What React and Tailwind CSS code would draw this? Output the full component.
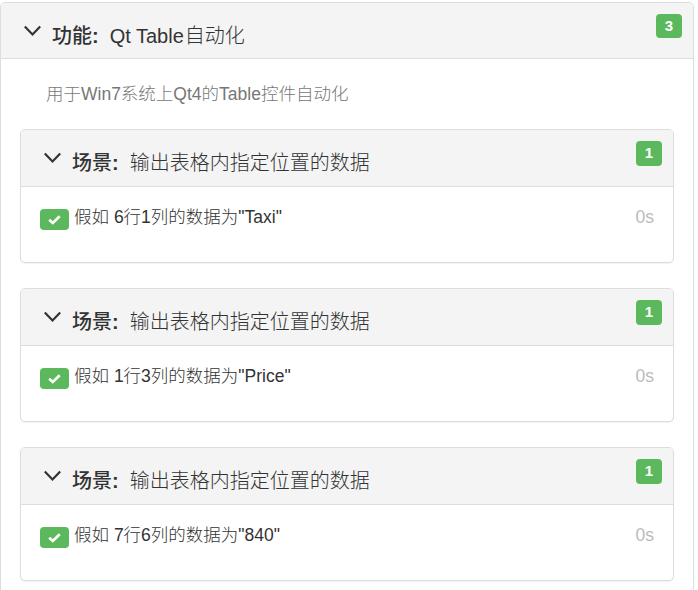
const scenarios = [
  { title: "输出表格内指定位置的数据", step: '6行1列的数据为"Taxi"', duration: "0s" },
  { title: "输出表格内指定位置的数据", step: '1行3列的数据为"Price"', duration: "0s" },
  { title: "输出表格内指定位置的数据", step: '7行6列的数据为"840"', duration: "0s" },
];

function Chevron() {
  return (
    <svg className="mt-[-9px] h-[12px] w-[18px] shrink-0" viewBox="0 0 18 12" fill="none" stroke="#333" strokeWidth="2.2">
      <path d="M0.8 1.5 L8.5 9.4 L16.2 1.5" />
    </svg>
  );
}

function Badge({ children, className }) {
  return (
    <span className={`mt-[11px] flex w-[26px] shrink-0 justify-center rounded-[4px] bg-[#5cb85c] text-[15px] leading-[24px] font-bold text-white ${className}`}>
      {children}
    </span>
  );
}

function Header({ label, title, count, className, badgeClassName }) {
  return (
    <div className={`flex items-start justify-between rounded-t-[4px] border-b border-[#ddd] bg-[#f4f4f4] pr-[11px] pl-[23px] ${className}`}>
      <div className="flex h-[65px] items-center text-[20px] leading-[24px] whitespace-pre">
        <Chevron />
        <span className="mt-[1px] ml-[10px] font-medium">
          {label}
          <span className="font-bold">:</span>
        </span>
        <span className="mt-[1px] ml-[11px]">{title}</span>
      </div>
      <Badge className={badgeClassName}>{count}</Badge>
    </div>
  );
}

function Scenario({ title, step, duration }) {
  return (
    <section className="h-[134px] rounded-[5px] border border-[#ddd] bg-white shadow-[0_1px_1px_rgba(0,0,0,0.05)]">
      <Header className="h-[57px]" badgeClassName="h-[25px]" label="场景" title={title} count={1} />
      <div className="flex items-start pt-[18px] pr-[19px] pl-[19px] text-[17.5px] leading-[25px]">
        <span className="mt-[4px] flex h-[21px] w-[29px] items-center justify-center rounded-[4px] bg-[#5cb85c]">
          <svg className="h-[10px] w-[13px]" viewBox="0 0 13 10" fill="none" stroke="white" strokeWidth="2.7">
            <path d="M1.2 4.7 L4.8 8 L11.7 1.3" />
          </svg>
        </span>
        <span className="ml-[5px]">假如 {step}</span>
        <span className="ml-auto text-[#bbb]">{duration}</span>
      </div>
    </section>
  );
}

export default function App() {
  return (
    <main className="h-[590px] overflow-hidden bg-white pt-[2px] font-['Liberation_Sans','Noto_Sans_CJK_SC',sans-serif] font-light text-[#333]">
      <div className="h-[620px] w-[694px] rounded-[5px] border border-[#ddd]">
        <Header
          className="h-[56px]"
          badgeClassName="h-[24px]"
          label="功能"
          title={<>Qt Table<span className="ml-[1px]">自动化</span></>}
          count={3}
        />
        <p className="mt-[23px] ml-[45px] h-[25px] text-[17.5px] leading-[25px] text-[#777]">用于Win7系统上Qt4的Table控件自动化</p>
        <div className="mx-[19px] mt-[22px] flex flex-col gap-[25px]">
          {scenarios.map((scenario, i) => (
            <Scenario key={i} {...scenario} />
          ))}
        </div>
      </div>
    </main>
  );
}
